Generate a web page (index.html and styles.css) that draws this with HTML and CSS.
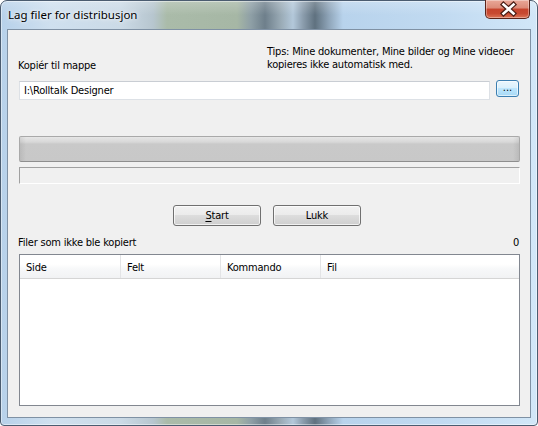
FILE: index.html
```html
<!DOCTYPE html>
<html lang="no">
<head>
<meta charset="utf-8">
<title>Lag filer for distribusjon</title>
<link rel="stylesheet" href="styles.css">
</head>
<body>
<div class="window">
  <div class="titlebar">
    <span class="title">Lag filer for distribusjon</span>
    <button class="close" type="button" aria-label="Lukk">
      <svg width="45" height="19" viewBox="0 0 45 19" aria-hidden="true">
        <path d="M18.5 5.5 L28.5 14.5 M28.5 5.5 L18.5 14.5" stroke="#4a1d14" stroke-width="5" stroke-linecap="square" fill="none"/>
        <path d="M18.5 5.5 L28.5 14.5 M28.5 5.5 L18.5 14.5" stroke="#ffffff" stroke-width="2.6" stroke-linecap="square" fill="none"/>
      </svg>
    </button>
  </div>
  <div class="client">
    <div class="row-top">
      <span class="label label-kopier">Kopiér til mappe</span>
      <p class="tips">Tips: Mine dokumenter, Mine bilder og Mine videoer<br>kopieres ikke automatisk med.</p>
    </div>
    <div class="row-path">
      <div class="textbox">I:\Rolltalk Designer</div>
      <button class="browse" type="button">...</button>
    </div>
    <div class="progress"></div>
    <div class="status"></div>
    <div class="actions">
      <button class="btn" type="button"><u>S</u>tart</button>
      <button class="btn" type="button">Lukk</button>
    </div>
    <div class="row-files">
      <span class="label">Filer som ikke ble kopiert</span>
      <span class="count">0</span>
    </div>
    <div class="listview">
      <div class="lv-header">
        <div class="col col-side">Side</div>
        <div class="col col-felt">Felt</div>
        <div class="col col-kommando">Kommando</div>
        <div class="col col-fil">Fil</div>
      </div>
      <div class="lv-body"></div>
    </div>
  </div>
</div>
</body>
</html>
```

FILE: styles.css
```css
* { box-sizing: border-box; }

html, body {
  margin: 0;
  padding: 0;
  width: 538px;
  height: 426px;
  background: #ffffff;
  overflow: hidden;
}

body {
  font-family: "DejaVu Sans Condensed", "DejaVu Sans", sans-serif;
  font-size: 11px;
  letter-spacing: -0.2px;
  color: #000;
}

.window {
  width: 538px;
  height: 426px;
  display: flex;
  flex-direction: column;
  border: 1px solid #4b5c70;
  border-radius: 7px 7px 4px 4px;
  box-shadow: inset 0 0 0 1px rgba(255,255,255,0.45);
  background:
    linear-gradient(to bottom, rgba(255,255,255,0.22) 0, rgba(255,255,255,0) 14px),
    linear-gradient(to right,
      #b7d1ea 0,
      #cfe0ef 50px,
      #cbdae6 120px,
      #b7c6cf 152px,
      #aabba9 166px,
      #a6b7a5 236px,
      #8e9fa6 250px,
      #6e7f8b 264px,
      #9aabb6 280px,
      #b3c8da 292px,
      #8b9dad 302px,
      #5f717f 314px,
      #8fa5b9 328px,
      #b8d3ec 342px,
      #c1daf1 440px,
      #d2e7f8 537px);
}

/* title bar */
.titlebar {
  height: 28px;
  flex: none;
  display: flex;
  justify-content: space-between;
  align-items: flex-start;
  padding-left: 7px;
}

.title {
  font-family: "Noto Sans", "Open Sans", sans-serif;
  font-size: 11.5px;
  letter-spacing: 0;
  line-height: 16px;
  padding-top: 6px;
  color: #000;
  text-shadow: 0 0 6px rgba(255,255,255,0.9), 0 0 3px rgba(255,255,255,0.8);
}

.close {
  width: 45px;
  height: 19px;
  margin: -1px 7px 0 0;
  padding: 0;
  border: 1px solid #5b2419;
  border-top: none;
  border-radius: 0 0 5px 5px;
  background: linear-gradient(to bottom,
    #e9a898 0, #dc8a77 45%, #c6432c 50%, #c84a31 75%, #dd7456 100%);
  box-shadow: inset 0 0 0 1px rgba(255,255,255,0.35);
  display: block;
}
.close svg { display: block; margin: -1px 0 0 -1px; }

/* client area */
.client {
  flex: 1;
  margin: 0 6px 7px 6px;
  border: 1px solid #7f91a4;
  background: #f0f0f0;
  padding: 15px 10px 11px 11px;
  display: flex;
  flex-direction: column;
}

.label { line-height: 13px; }

.row-top {
  display: flex;
  justify-content: space-between;
  align-items: flex-end;
  height: 26px;
}
.label-kopier { margin-left: -1px; margin-bottom: -1px; }

.tips {
  margin: 0 3px 0 0;
  width: 250px;
  flex: none;
  line-height: 13px;
  white-space: nowrap;
}

.row-path {
  margin-top: 10px;
  display: flex;
  align-items: flex-start;
  gap: 6px;
  height: 19px;
}

.textbox {
  flex: 1;
  height: 19px;
  background: #fff;
  border: 1px solid #dde1e6;
  border-top-color: #c9cdd3;
  padding-left: 4px;
  line-height: 17px;
  white-space: nowrap;
}

.browse {
  width: 23px;
  height: 17px;
  margin: -1px 1px 0 0;
  padding: 0 0 3px 0;
  font-family: inherit;
  font-size: 11px;
  line-height: 10px;
  color: #000;
  border: 1px solid #3c7fb1;
  border-radius: 3px;
  background: linear-gradient(to bottom, #eaf6fd 0, #d9f0fc 50%, #bee6fd 50%, #a7d9f5 100%);
  box-shadow: inset 0 0 0 1px rgba(255,255,255,0.6);
  display: flex;
  align-items: flex-end;
  justify-content: center;
}

.progress {
  margin-top: 36px;
  height: 26px;
  border: 1px solid #a9a9a9;
  border-bottom-color: #8e8e8e;
  border-radius: 2px;
  background:
    linear-gradient(to right, rgba(0,0,0,0.07) 0, rgba(0,0,0,0) 6px, rgba(0,0,0,0) calc(100% - 6px), rgba(0,0,0,0.07) 100%),
    linear-gradient(to bottom, #e6e6e6 0, #d8d8d8 5px, #c9c9c9 7px, #c8c8c8 100%);
}

.status {
  margin-top: 5px;
  height: 17px;
  border: 1px solid;
  border-color: #a0a0a0 #ffffff #ffffff #a0a0a0;
}

.actions {
  margin-top: 21px;
  display: flex;
  gap: 12px;
  padding-left: 154px;
}

.btn {
  width: 88px;
  height: 21px;
  padding: 0;
  font-family: inherit;
  font-size: 11px;
  letter-spacing: -0.2px;
  line-height: 19px;
  color: #000;
  border: 1px solid #707070;
  border-radius: 3px;
  background: linear-gradient(to bottom, #f2f2f2 0, #ebebeb 50%, #dddddd 50%, #cfcfcf 100%);
  box-shadow: inset 0 0 0 1px rgba(255,255,255,0.7);
}
.btn u { text-decoration: underline; text-underline-offset: 2px; }

.row-files {
  margin-top: 10px;
  display: flex;
  justify-content: space-between;
  line-height: 13px;
}
.row-files .label { margin-left: -1px; }
.count { margin-right: 1px; }

.listview {
  margin-top: 5px;
  flex: 1;
  border: 1px solid #828790;
  background: #fff;
  display: flex;
  flex-direction: column;
}

.lv-header {
  height: 24px;
  flex: none;
  display: flex;
  border-bottom: 1px solid #d5d5d5;
  background: linear-gradient(to bottom, #ffffff 0, #ffffff 40%, #f7f8f9 60%, #f1f2f4 100%);
}

.col {
  padding: 6px 0 0 6px;
  line-height: 13px;
  border-right: 1px solid #e3e4e6;
  white-space: nowrap;
}
.col-side { width: 101px; }
.col-felt { width: 100px; }
.col-kommando { width: 100px; }
.col-fil { flex: 1; border-right: none; }

.lv-body { flex: 1; }
```
